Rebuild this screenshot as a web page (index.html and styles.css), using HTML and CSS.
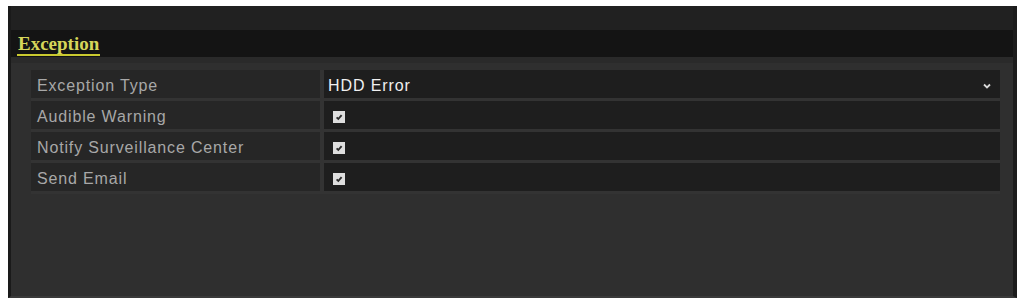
FILE: index.html
```html
<!DOCTYPE html>
<html>
<head>
	<title>Exception</title>
	<link rel="stylesheet" href="styles.css">
</head>
<body>
	<div class='panel'>
		<div class='paneltop'></div>
		<div class='tabbar'>
			<span class='tab'>Exception</span>
		</div>
		<div class='panelbody'>
			<div class='settings'>
				<div class='row'>
					<div class='label'>Exception Type</div>
					<div class='value'>
						<span class='selected'>HDD Error</span>
						<svg class='arrow' width='8' height='6' viewBox='0 0 8 6'><path d='M1 1.5 L4 4.5 L7 1.5' fill='none' stroke='#d8d8d8' stroke-width='1.8'/></svg>
					</div>
				</div>
				<div class='row'>
					<div class='label'>Audible Warning</div>
					<div class='value'><span class='check'><svg width='12' height='12' viewBox='0 0 12 12'><path d='M3.6 6.4 L5.3 8 L8.6 4.2' fill='none' stroke='#2a2a2a' stroke-width='1.9'/></svg></span></div>
				</div>
				<div class='row'>
					<div class='label'>Notify Surveillance Center</div>
					<div class='value'><span class='check'><svg width='12' height='12' viewBox='0 0 12 12'><path d='M3.6 6.4 L5.3 8 L8.6 4.2' fill='none' stroke='#2a2a2a' stroke-width='1.9'/></svg></span></div>
				</div>
				<div class='row'>
					<div class='label'>Send Email</div>
					<div class='value'><span class='check'><svg width='12' height='12' viewBox='0 0 12 12'><path d='M3.6 6.4 L5.3 8 L8.6 4.2' fill='none' stroke='#2a2a2a' stroke-width='1.9'/></svg></span></div>
				</div>
			</div>
		</div>
	</div>
</body>
</html>
```

FILE: styles.css
```css
body {
	margin: 0;
	background-color: white;
	font-family: "Liberation Sans", Arial, sans-serif;
}
.panel {
	margin: 6px 7px 0 8px;
	height: 290px;
	background-color: #2f2f2f;
	border-left: 3px solid #1a1a1a;
	border-right: 4px solid #1c1c1c;
	border-bottom: 2px solid #3a3a3a;
	display: flex;
	flex-direction: column;
}
.paneltop {
	height: 24px;
	background-color: #212121;
}
.tabbar {
	height: 27px;
	background-color: #141414;
	padding-left: 6px;
	display: flex;
	align-items: flex-end;
}
.tab {
	font-family: "Liberation Serif", "Times New Roman", serif;
	font-weight: bold;
	font-size: 19px;
	color: #d6d65a;
	border-bottom: 2px solid #caca30;
	padding: 0 1px 0 1px;
	line-height: 21px;
	margin-bottom: 1px;
}
.panelbody {
	flex: 1;
	background-color: #2f2f2f;
	padding: 7px 13px 0 20px;
	border-top: 6px solid #2a2a2a;
}
.settings {
	display: flex;
	flex-direction: column;
	gap: 3px;
	background-color: #333333;
	padding-bottom: 3px;
}
.row {
	display: flex;
	height: 28px;
	gap: 4px;
}
.label {
	width: 283px;
	background-color: #262626;
	color: #a8a8a8;
	font-size: 16px;
	letter-spacing: 0.85px;
	padding: 4px 0 0 6px;
	display: flex;
	align-items: center;
}
.value {
	flex: 1;
	background-color: #1e1e1e;
	display: flex;
	align-items: center;
	padding: 3px 8px 0 4px;
}
.selected {
	color: #f0f0f0;
	font-size: 16px;
	letter-spacing: 0.9px;
	flex: 1;
}
.arrow {
	margin-right: 1px;
}
.check {
	width: 12px;
	height: 12px;
	margin-left: 5px;
	background-color: #dedede;
	display: flex;
}
```
